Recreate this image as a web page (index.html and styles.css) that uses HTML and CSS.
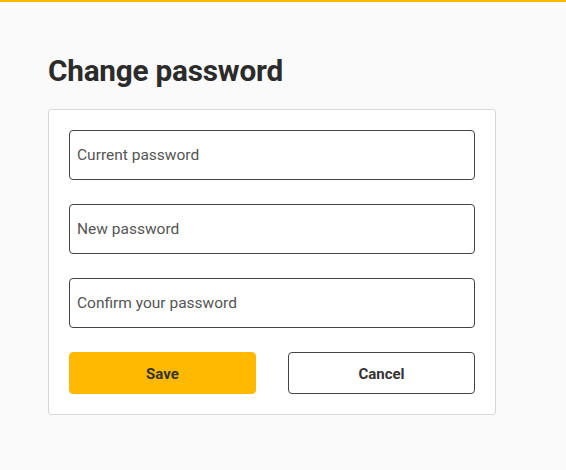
FILE: index.html
```html
<!DOCTYPE html>
<html>
<head>
<meta charset="utf-8">
<link rel="stylesheet" href="styles.css">
</head>
<body>
<div class="topbar"></div>
<main class="page">
  <h1 class="title">Change password</h1>
  <form class="card">
    <input class="field" type="password" placeholder="Current password">
    <input class="field" type="password" placeholder="New password">
    <input class="field" type="password" placeholder="Confirm your password">
    <div class="actions">
      <button type="button" class="btn btn-primary">Save</button>
      <button type="button" class="btn btn-secondary">Cancel</button>
    </div>
  </form>
</main>
</body>
</html>
```
FILE: styles.css
```css
html, body {
  margin: 0;
  padding: 0;
  background: #fafafa;
  font-family: Roboto, "Liberation Sans", sans-serif;
  color: #2b2b2b;
}
.topbar {
  height: 2px;
  background: #ffb900;
}
.page {
  padding: 50px 0 0 48px;
  width: 448px;
}
.title {
  margin: 0 0 20px 0;
  font-size: 29.7px;
  line-height: 37px;
  font-weight: 700;
  color: #2b2b2b;
  letter-spacing: -0.2px;
}
.card {
  background: #fff;
  border: 1px solid #d8d8d8;
  border-radius: 3px;
  padding: 20px;
  display: flex;
  flex-direction: column;
  gap: 24px;
}
.field {
  box-sizing: border-box;
  height: 50px;
  width: 100%;
  margin: 0;
  border: 1px solid #444;
  border-radius: 4px;
  padding: 0 7px;
  font-family: Roboto, "Liberation Sans", sans-serif;
  font-size: 15.5px;
  color: #333;
  background: #fff;
  outline: none;
}
.field::placeholder {
  color: #555;
}
.actions {
  display: grid;
  grid-template-columns: 1fr 1fr;
  gap: 32px;
}
.btn {
  box-sizing: border-box;
  height: 42px;
  margin: 0;
  padding: 2px 0 0 0;
  border-radius: 4px;
  font-family: Roboto, "Liberation Sans", sans-serif;
  font-size: 15px;
  font-weight: 700;
  color: #333;
  cursor: pointer;
}
.btn-primary {
  background: #ffb900;
  border: 1px solid #ffb900;
}
.btn-secondary {
  background: #fff;
  border: 1px solid #444;
}
```
